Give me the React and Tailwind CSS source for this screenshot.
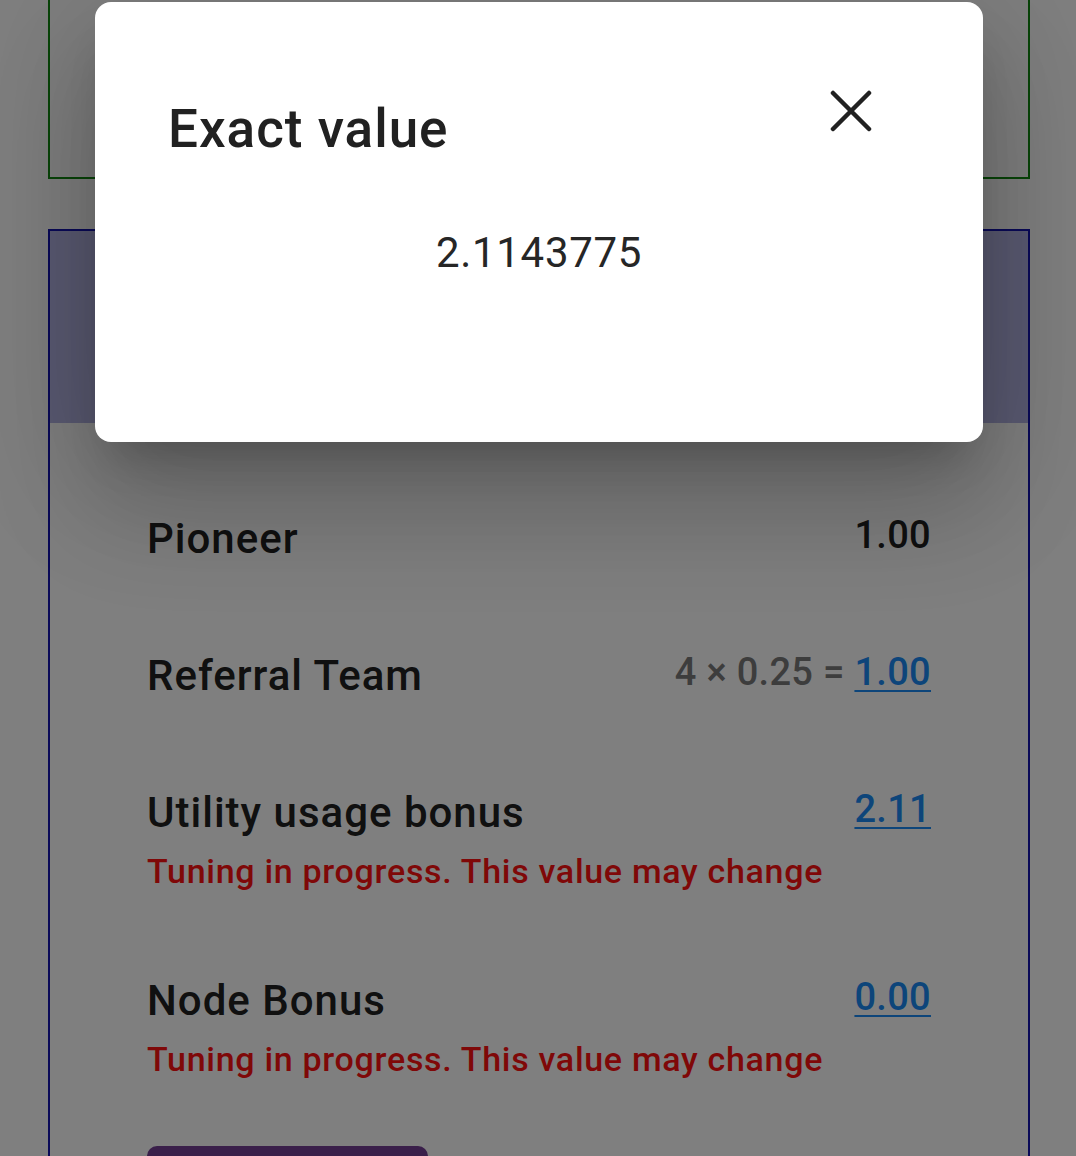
import React from "react";

const rows = [
  { label: "Pioneer", plain: "1.00" },
  { label: "Referral Team", prefix: "4 × 0.25 = ", link: "1.00" },
  { label: "Utility usage bonus", link: "2.11", note: true },
  { label: "Node Bonus", link: "0.00", note: true },
];

function Row({ row, className }) {
  return (
    <div className={className}>
      <div className="flex items-start justify-between">
        <span className="text-[42px] leading-[48px] font-medium tracking-[1px] text-[#212121]">{row.label}</span>
        <span className="text-[38px] leading-[40px] font-medium tracking-[0.3px]">
          {row.prefix ? <span className="text-[#7a7a7a]">{row.prefix}</span> : null}
          {row.plain ? <span className="text-[#212121]">{row.plain}</span> : null}
          {row.link ? (
            <a className="text-[#1a8af5] underline decoration-2 underline-offset-[5px]">{row.link}</a>
          ) : null}
        </span>
      </div>
      {row.note ? (
        <p className="mt-[14px] text-[34px] leading-[40px] font-medium tracking-[0.7px] text-[#ff1010]">
          Tuning in progress. This value may change
        </p>
      ) : null}
    </div>
  );
}

export default function App() {
  return (
    <div className="relative h-[1156px] overflow-hidden bg-white font-['Roboto',sans-serif]">
      {/* page underneath */}
      <div className="pl-[48px] pr-[46px]">
        <div className="h-[179px] border-2 border-t-0 border-[#138a13]" />
        <div className="mt-[50px] border-2 border-[#1414b0]">
          <div className="h-[192px] bg-[#b4b4e4]" />
          <div className="px-[97px] pt-[92px]">
            <Row row={rows[0]} />
            <Row row={rows[1]} className="mt-[89px]" />
            <Row row={rows[2]} className="mt-[89px]" />
            <Row row={rows[3]} className="mt-[86px]" />
            <button className="mt-[67px] h-[90px] w-[281px] rounded-[10px] bg-[#743e94]" />
          </div>
        </div>
      </div>

      {/* scrim */}
      <div className="absolute inset-0 bg-black/50" />

      {/* dialog */}
      <div className="absolute left-[95px] top-[2px] h-[440px] w-[888px] rounded-[16px] bg-white shadow-[0_30px_41px_-19px_rgba(0,0,0,0.2),0_66px_105px_8px_rgba(0,0,0,0.14),0_25px_126px_22px_rgba(0,0,0,0.12)]">
        <div className="flex items-start justify-between pl-[73px] pr-[111px] pt-[88px]">
          <h2 className="mt-[9px] text-[53px] leading-[60px] font-medium tracking-[1px] text-[#212121]">Exact value</h2>
          <button aria-label="Close" className="h-[42px] w-[42px]">
            <svg viewBox="0 0 42 42" width="42" height="42">
              <path d="M3 3 39 39M39 3 3 39" stroke="#212121" strokeWidth="4.5" strokeLinecap="round" fill="none" />
            </svg>
          </button>
        </div>
        <p className="mt-[69px] text-center text-[42px] leading-[50px] tracking-[0.7px] text-[#262626]">2.1143775</p>
      </div>
    </div>
  );
}
